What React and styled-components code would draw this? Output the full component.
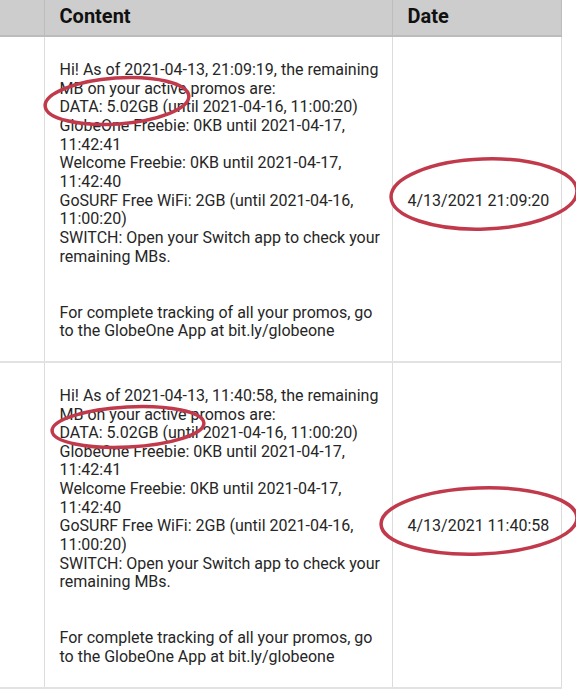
import styled, { createGlobalStyle } from "styled-components";

const GlobalStyle = createGlobalStyle`
  html, body {
    margin: 0;
    padding: 0;
    background: #ffffff;
  }
  body {
    font-family: Roboto, "Noto Sans", sans-serif;
    color: #222222;
  }
`;

const Page = styled.div`
  position: relative;
  width: 576px;
  height: 692px;
  overflow: hidden;
`;

const Table = styled.table`
  border-collapse: collapse;
  table-layout: fixed;
  width: 561px;
`;

const HeadCell = styled.th`
  width: ${(p) => p.w}px;
  height: 36px;
  padding: 0 15px 4px;
  background: #cdcdcd;
  border-right: 1px solid #bdbdbd;
  border-bottom: 2px solid #bcbcbc;
  text-align: left;
  font-size: 20px;
  font-weight: 700;
  color: #111;
  box-sizing: border-box;
`;

const Cell = styled.td`
  padding: 24px 15px 20px;
  border-right: 1px solid #dcdcdc;
  border-bottom: 2px solid #e2e2e2;
  vertical-align: middle;
  font-size: 16px;
  line-height: 18.65px;
  white-space: pre;
  color: #262626;
`;

const Marks = styled.svg`
  position: absolute;
  left: 0;
  top: 0;
  pointer-events: none;
`;

const rows = [
  { time: "21:09:19", date: "4/13/2021 21:09:20" },
  { time: "11:40:58", date: "4/13/2021 11:40:58" },
];

const message = (time) =>
  `Hi! As of 2021-04-13, ${time}, the remaining
MB on your active promos are:
DATA: 5.02GB (until 2021-04-16, 11:00:20)
GlobeOne Freebie: 0KB until 2021-04-17,
11:42:41
Welcome Freebie: 0KB until 2021-04-17,
11:42:40
GoSURF Free WiFi: 2GB (until 2021-04-16,
11:00:20)
SWITCH: Open your Switch app to check your
remaining MBs.


For complete tracking of all your promos, go
to the GlobeOne App at bit.ly/globeone`;

export default function App() {
  return (
    <>
      <GlobalStyle />
      <Page>
        <Table>
          <thead>
            <tr>
              <HeadCell w={44}></HeadCell>
              <HeadCell w={348}>Content</HeadCell>
              <HeadCell w={169}>Date</HeadCell>
            </tr>
          </thead>
          <tbody>
            {rows.map((r) => (
              <tr key={r.date}>
                <Cell></Cell>
                <Cell>{message(r.time)}</Cell>
                <Cell>{r.date}</Cell>
              </tr>
            ))}
          </tbody>
        </Table>
        <Marks width="576" height="692" viewBox="0 0 576 692">
          <g fill="none" stroke="#c13a4c" strokeWidth="3.5">
            <ellipse cx="117" cy="101" rx="72" ry="23" transform="rotate(-4 117 101)" />
            <ellipse cx="484" cy="194" rx="93" ry="35" transform="rotate(-2 484 194)" />
            <ellipse cx="128" cy="427" rx="76" ry="20" transform="rotate(-3 128 427)" />
            <ellipse cx="479" cy="521" rx="98" ry="33" transform="rotate(-2 479 521)" />
          </g>
        </Marks>
      </Page>
    </>
  );
}
